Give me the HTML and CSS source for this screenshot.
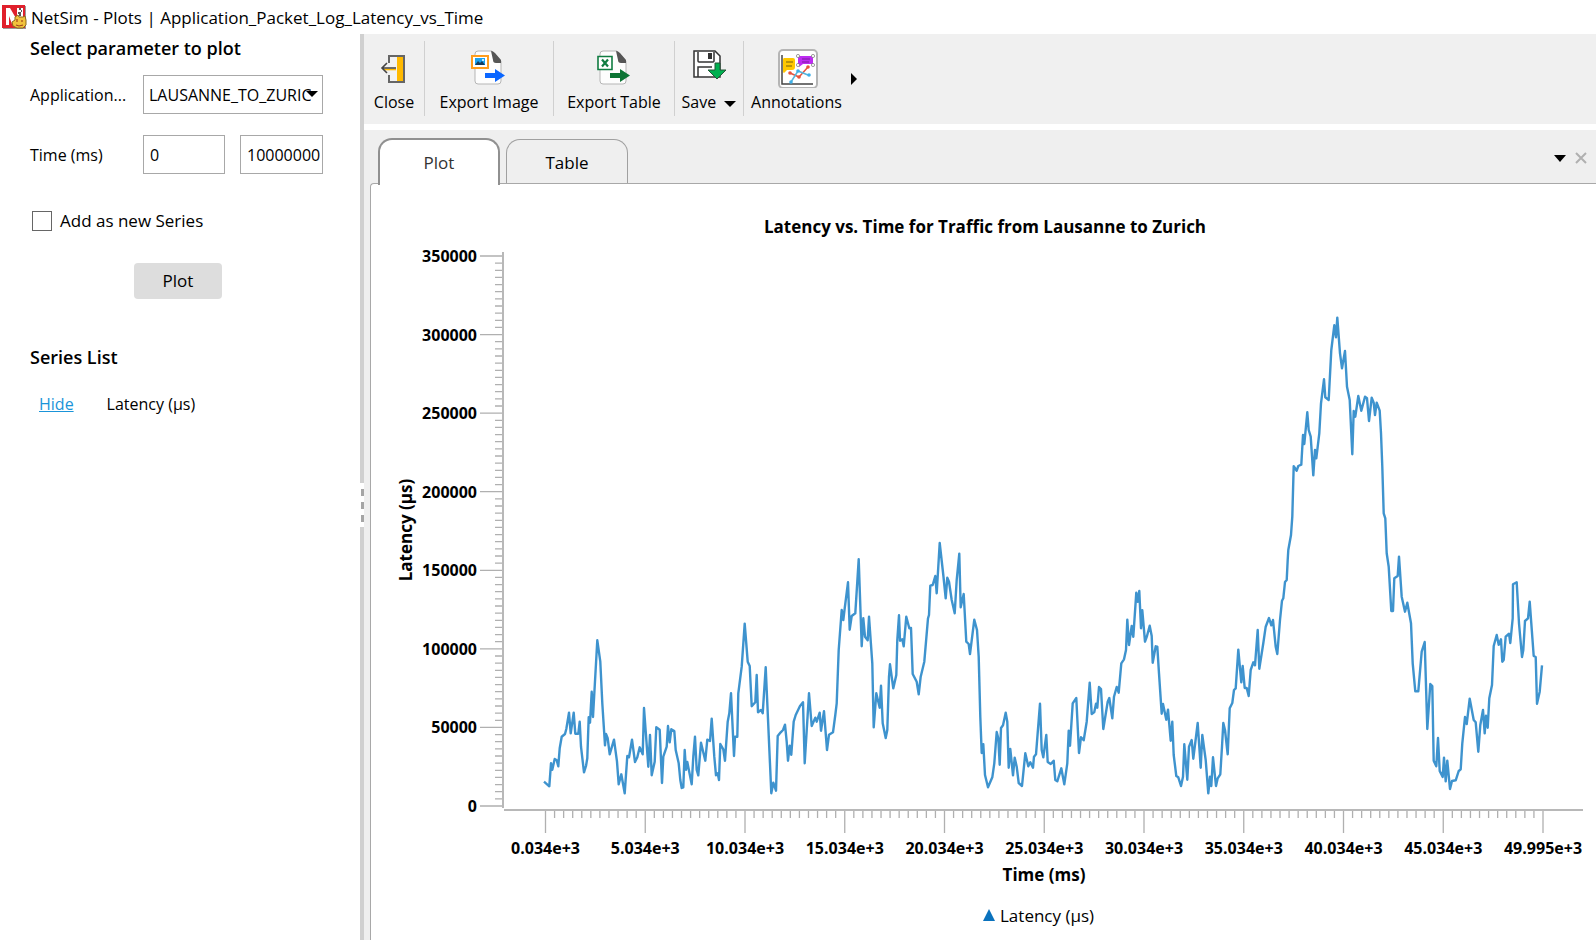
FILE: index.html
```html
<!DOCTYPE html>
<html lang="en">
<head>
  <meta charset="UTF-8">
  <meta name="viewport" content="width=device-width, initial-scale=1.0">
  <title>NetSim - Plots | Application_Packet_Log_Latency_vs_Time</title>
  <link rel="stylesheet" href="styles.css">
</head>
<body>

<header class="titlebar">
  <svg class="logo" width="25" height="25" viewBox="0 0 25 25">
    <rect x="1" y="1" width="23" height="23" fill="#999"/>
    <rect x="0" y="0" width="23" height="23" fill="#e0202c"/>
    <path d="M4 20V3h4l7 12V3h6v10h-7l-4 6-3-8v9z" fill="#fff"/>
    <path d="M17 4h2M19 6h1M16 8h3M17 10h2" stroke="#222" stroke-width="1.500"/>
    <path d="M13 12l3-2 1 2h4l2-1 1 4v5l-3 3h-6l-4-2-1-4 3-2z" fill="#f2c23c" stroke="#8a6a1c" stroke-width="1"/>
    <path d="M15 14v3M20 15v2M14 20l3 1 4-1" stroke="#a0421a" stroke-width="1.200" fill="none"/>
  </svg>
  <span>NetSim - Plots | Application_Packet_Log_Latency_vs_Time</span>
</header>

<div class="workspace">
  <aside class="sidebar">
    <h2>Select parameter to plot</h2>
    <form class="params">
      <label for="application">Application...</label>
      <span class="select-wrap">
        <select id="application">
          <option>LAUSANNE_TO_ZURICH</option>
        </select>
        <svg class="caret" width="12" height="6" viewBox="0 0 12 6"><path d="M0 0h12L6 6z"/></svg>
      </span>

      <label for="timeFrom">Time (ms)</label>
      <input type="text" id="timeFrom" value="0">
      <input type="text" id="timeTo" value="10000000" aria-label="Time to (ms)">

      <label class="check"><input type="checkbox" name="newSeries"> Add as new Series</label>
      <button class="plot-button" type="button">Plot</button>
    </form>

    <h2>Series List</h2>
    <div class="series">
      <a href="#">Hide</a>
      <span>Latency (µs)</span>
    </div>
  </aside>

  <div class="splitter"><div class="grip"><i></i><i></i><i></i></div></div>

  <main class="content">
    <div class="toolbar">
      <button type="button" class="tool close">
        <svg width="38" height="38" viewBox="0 0 38 38">
          <path d="M14 15V8h15v26H14v-7" fill="#f2f2f2" stroke="#666" stroke-width="2"/>
          <path d="M22 9h6v24h-6z" fill="#ffb900"/>
          <path d="M9 21.500h12" stroke="#ffb900" stroke-width="1.600"/>
          <path d="M7 20h14M12 15l-5 5 5 5" fill="none" stroke="#444" stroke-width="1.600"/>
        </svg>
        <span>Close</span>
      </button>
      <button type="button" class="tool image">
        <svg width="38" height="38" viewBox="0 0 38 38">
          <path d="M5 6q0-3 3-3h14l9 10v20q0 3-3 3H8q-3 0-3-3z" fill="#fdfdfd" stroke="#b5b5b5"/>
          <path d="M21 3q2 0 4 2l6 7v3h-5q-3 0-3-3z" fill="#555"/>
          <path d="M2 8h16v12H2z" fill="#fff" stroke="#ff9d1c" stroke-width="2"/>
          <path d="M5 10h10v7H5z" fill="#1aa3f0"/>
          <path d="M5 17l3-4 2 2 2-2 3 4z" fill="#143c60"/>
          <circle cx="13" cy="12" r="1" fill="#fff"/>
          <path d="M15 25h10v-4l10 6.500-10 6.500v-4H15z" fill="#0a66ff"/>
        </svg>
        <span>Export Image</span>
      </button>
      <button type="button" class="tool table">
        <svg width="38" height="38" viewBox="0 0 38 38">
          <path d="M5 6q0-3 3-3h14l9 10v20q0 3-3 3H8q-3 0-3-3z" fill="#fdfdfd" stroke="#b5b5b5"/>
          <path d="M21 3q2 0 4 2l6 7v3h-5q-3 0-3-3z" fill="#555"/>
          <path d="M3 8.500h14v13H3z" fill="#fff" stroke="#107c41" stroke-width="1.600"/>
          <path d="M7 11.500l6 7M13 11.500l-6 7" stroke="#107c41" stroke-width="2.200"/>
          <path d="M15 25h10v-4l10 6.500-10 6.500v-4H15z" fill="#0c7434"/>
        </svg>
        <span>Export Table</span>
      </button>
      <button type="button" class="tool save">
        <svg width="38" height="38" viewBox="0 0 38 38">
          <path d="M4 3h21l5 5v21H4z" fill="#fff" stroke="#333" stroke-width="1.500"/>
          <path d="M8 4v9q0 1 1 1h14q1 0 1-1V4M8 29V19h14" fill="none" stroke="#333" stroke-width="1.500"/>
          <path d="M18 5h4v6h-4z" fill="#333"/>
          <path d="M25 15h5v7h6l-9 9-9-9h7z" fill="#00b050" stroke="#245437"/>
        </svg>
        <span>Save <svg class="caret" width="12" height="6" viewBox="0 0 12 6"><path d="M0 0h12L6 6z"/></svg></span>
      </button>
      <button type="button" class="tool annotations">
        <svg width="42" height="40" viewBox="0 0 42 40">
          <g transform="translate(2 1)">
            <rect x="1" y="1" width="38" height="38" rx="4" fill="#fff" stroke="#b5b5b5" stroke-width="2"/>
            <path d="M4 6v29h31" fill="none" stroke="#444" stroke-width="1.500"/>
            <path d="M12 24l9 4 9-10" fill="none" stroke="#e8533c" stroke-width="1.500"/>
            <path d="M13 33l7-11 10 4" fill="none" stroke="#55b4dc" stroke-width="1.500"/>
            <g fill="#e8533c"><circle cx="12" cy="24" r="1.800"/><circle cx="21" cy="28" r="1.800"/><circle cx="30" cy="18" r="1.800"/></g>
            <g fill="#3fb0e8"><circle cx="13" cy="33" r="1.800"/><circle cx="20" cy="22" r="1.800"/><circle cx="31" cy="26" r="1.800"/></g>
            <path d="M6 9h9q2 0 2 2v7q0 3-3 3H9l-3 3q-1 0-1-2V11q0-2 1-2z" fill="#ffc800"/>
            <path d="M8 13h7M8 17h6" stroke="#74600c" stroke-width="1.200"/>
            <path d="M20 7h15v8H25l-4 3v-3h-1z" fill="#be2cf2"/>
            <path d="M24 10h8M24 13h7" stroke="#7a1b9e"/>
            <g fill="#fff" stroke="#777" stroke-width=".7"><circle cx="20" cy="7" r="1.600"/><circle cx="35" cy="7" r="1.600"/><circle cx="20" cy="16" r="1.600"/><circle cx="35" cy="16" r="1.600"/></g>
          </g>
        </svg>
        <span>Annotations</span>
      </button>
      <button type="button" class="more" aria-label="More">
        <svg width="6" height="12" viewBox="0 0 6 12"><path d="M0 0l6 6-6 6z"/></svg>
      </button>
    </div>

    <div class="tabs">
      <button type="button" class="tab active">Plot</button>
      <button type="button" class="tab">Table</button>
      <button type="button" class="tab-menu" aria-label="Tab list">
        <svg width="12" height="7" viewBox="0 0 12 7"><path d="M0 0h12L6 7z"/></svg>
      </button>
      <button type="button" class="tab-close" aria-label="Close tab">
        <svg width="12" height="12" viewBox="0 0 12 12"><path d="M1 1l10 10M11 1L1 11" stroke="#b0b0b0" stroke-width="2"/></svg>
      </button>
    </div>

    <section class="panel">
      <svg class="chart" viewBox="371 184 1225 756">
        <text class="chart-title" x="985" y="233">Latency vs. Time for Traffic from Lausanne to Zurich</text>
        <text class="axis-title" transform="translate(412 530) rotate(-90)">Latency (µs)</text>
        <path class="axis" d="M503 252v556M504 810h1079"/>
        <path class="ticks" id="ticks"/>
        <g class="y-labels" id="yLabels"></g>
        <g class="x-labels" id="xLabels"></g>
        <polyline class="line" points="
          544,781.7 549.3,786.3 551,763.3 552.3,769.7 554.7,759 556.7,760.3 558.3,766.3 559.7,748.3 561.7,736.7 565,734 566.3,729 569,712.7
          570.7,733.3 573.7,712.7 575.3,733.7 578.3,733.7 579.7,721.7 581,746.7 584,772.3 586,766 587.3,758.3 588.7,717.3 590,722.7 591.7,691.7
          593,717 597.3,640.3 600.3,661.7 602.3,703.3 605,745.3 606,734 607.7,738.3 609.7,754.3 614,739.7 617,761.7 618.7,784.3 621.3,774.3
          624.7,793.3 627.3,756 629,757.3 632,739.7 635,762 637.3,757.3 639.7,747.3 642.7,754.3 644,708 648.3,766.7 650,735 651.7,775.3
          654.7,761.7 656.3,727.3 659.7,729.7 662,783 663.3,756.7 666.7,746.7 668,726 669.7,742.3 671.3,729.3 674.3,731 675.7,750 678.7,763.3
          680.3,780 681.7,788 683.3,787.3 684.7,750 686,769.7 687.3,762 691.7,784.3 693.3,756.7 695,736.7 696.7,770 698.3,775.3 701,742.7
          705.3,760.7 707.3,739.7 710,741 711.7,718.7 714.3,756.7 716,775.3 717.7,773.3 719,780 720.3,744 723.3,749.3 725,760.7 727.7,721.7
          729.3,713.3 731,693.3 734,756 735,736.7 737.3,736.7 738.3,693.3 741.7,666.7 744.7,623.7 747.7,661.7 749.7,666 751.7,706.3 755.3,702.3
          756.7,675 758,712.3 761,710 762.7,713.3 765.7,667.3 771.3,793.3 773.3,782.7 776,790.7 777.7,736 780.7,732.3 783,730 785,724.7
          786.7,741.7 788,760.7 789.7,745.7 791.3,754.7 793.7,721.7 795.7,715 800,706 803,702.3 804.7,763.3 809,693.3 811.7,726 815.3,717.7
          816.7,721.7 819.7,712.7 821,730.7 824,711.3 827,750 829,734.7 833,732.3 835.3,715 836.7,703.3 838.7,650 841.7,610 843.3,620
          844.7,608.3 848,582.3 849.7,629.7 851.7,616 855.3,613.3 858.7,559.3 861.7,646.3 863.3,618.3 865,636.7 867.7,640.3 869,616.7 872.3,663.3
          873.7,727.3 876.3,693.3 879.7,707.7 881,685.7 882.7,723.3 885.7,738 887.3,730 889,676.7 890,664.3 893.3,688.3 896.3,675 897.3,640
          899,615.3 900,640.7 902.3,639.3 903.7,646.3 906.3,616.7 909.3,628.3 911,628 912.7,674 916.7,681.7 918.7,694.3 920.7,676.7 924.3,661.7
          928,618.3 929,615 930.3,585.7 932.7,585 935.3,576 936.7,593.3 939.7,543 943.3,575 945.7,598.3 947.3,577.7 949,581.7 951.7,600
          954.7,613.3 956.7,580 959.3,553.7 960.7,607.3 963.7,594 966.3,641.7 968.7,644 970,654 974.3,619.7 977,630 978.7,656.7 980.3,716.7
          981.7,753 983.3,744.3 985,775 988,787.3 992.3,777.3 994.3,763.3 996.7,732 998.3,738.3 999.7,764.7 1001,728 1003,725.3 1005.7,712.7
          1007.3,721.7 1008.7,767.7 1010.3,749 1013,775.3 1014.7,757.7 1016.7,766.7 1018.7,783 1022,786 1025.3,753.3 1028.3,766.3 1030.3,762.3 1033,767.7
          1034,756.7 1036,754.3 1040,703.7 1041.7,750 1043.3,757.3 1046.3,735 1047.7,762 1050.7,764 1053.7,760.7 1055.3,780 1057.3,781.3 1061.3,768.3
          1064.3,784.3 1067.3,763.3 1068.7,730.7 1070,745.7 1072.7,703.3 1076.3,698 1079,753 1081,737.3 1083.7,740.3 1086.7,721.7 1089.7,682.7 1091.7,714
          1094.3,712 1096,703.7 1097.3,707.7 1099,687 1101,689 1103.3,729 1107.7,701.7 1109.3,698 1112.3,718.3 1114,696.7 1116.7,687 1118.7,692.7
          1121.3,663.3 1124,659.3 1126,650 1127.3,619.7 1129,645 1131.7,626 1133.3,636.7 1136.3,592.7 1137.7,601.7 1139.3,591 1141,628.3 1142.3,610.3
          1145,641.7 1147,636 1149.7,625.7 1151.7,636 1152.7,662.7 1155.7,646.3 1157.3,646.7 1159,673.3 1161.7,713.7 1163,704 1166.3,719.7 1168,709.7
          1170.7,740.7 1172.3,721.7 1173.7,755 1176.3,776 1178.3,777.3 1181,786 1183,776.7 1184.3,744.3 1187.3,779.7 1189,746.7 1191.7,740 1193.3,758.7
          1197.7,723 1200.7,767.7 1202.3,735 1205.7,760 1208.3,793.3 1210,776.7 1211.3,786 1213,757.3 1216,786 1217.7,778.3 1220.3,774.3 1222,746.7
          1223.3,723 1225,730 1227.7,754.3 1229.7,708.3 1232.3,703 1234,690 1235.7,688.3 1238.3,649.7 1241.3,682.3 1242.7,666 1244.7,688 1246.7,688
          1248.7,696 1250.7,670 1253.3,662.3 1255,665.3 1257.7,630 1259.3,668.7 1263.3,643.3 1265.7,626.7 1269,618 1271.3,625.3 1273,620 1275.7,646.7
          1277.3,654 1280,620 1282,600.7 1283.3,598.3 1285,582 1286.7,580 1287.7,560 1288.3,550 1291,535 1292.3,516.7 1293.7,466.3 1296.7,470.7
          1298.3,466 1301.3,464.7 1303,435 1304.3,444 1307.3,412.3 1308.7,430 1310.7,436.7 1313.3,475.3 1315,450 1316.3,458.3 1319.3,433.3 1321,403.3
          1324,379.3 1325.3,397.3 1328.7,400 1331.3,350 1334.3,325.3 1336,337.3 1337.3,317.7 1340,353.3 1342,368.3 1345,351 1347,386.7 1349.7,400
          1352.3,454.3 1353.7,411 1355.3,416.7 1358.3,396 1361.3,410.7 1365,396.7 1367,398.3 1369,421 1371.7,397.7 1373.7,402.7 1375,415 1376.7,402.7
          1379.7,410.7 1381,433.3 1382.3,466.7 1383.7,513.3 1385.3,518.3 1386.7,553.3 1388.7,566.7 1391.3,611 1393,611 1394.3,578.3 1397.7,576 1399,556.7
          1401.7,596.7 1405,611.7 1407.3,602.7 1411,623.3 1412.7,663.3 1415.3,691.3 1418.3,691.3 1421.7,651.7 1424.7,642 1427.3,729 1430.3,684 1432.3,686
          1433.7,760.7 1436.3,766.3 1438,738 1439.7,771 1442.7,777 1444,757.7 1445.7,781.3 1447.3,760.7 1450,789 1452,781 1455.7,780.3 1458.7,771
          1460.7,769.3 1462.3,743.3 1465,717 1466.7,724 1469.7,698.7 1473.7,720 1475.7,722.3 1478.3,751.7 1480.3,725 1483,710 1484.7,733.3 1486,715.7
          1487.7,727.7 1489.3,698.3 1492,685 1493.7,646 1496.7,635 1498.7,644.7 1501,639.3 1502.3,661.7 1503.7,660 1505.7,636.7 1509,633.7 1510.3,643
          1512.7,618.3 1513,584.3 1516.7,582.3 1519,623.3 1522,657 1523.3,650 1525,621 1528,618.3 1529.7,601.7 1533.7,656 1535.7,657 1537,703.7
          1539.7,691.7 1542,665.3"/>
        <text class="axis-title" x="1044" y="881">Time (ms)</text>
        <path d="M983 921l6-12 6 12z" fill="#0a72bd"/>
        <text class="legend" x="1000" y="922">Latency (µs)</text>
      </svg>
    </section>
  </main>
</div>

<script src="chart.js"></script>
</body>
</html>
```
FILE: styles.css
```css
* { box-sizing: border-box; }
body {
  margin: 0; height: 100vh; display: flex; flex-direction: column;
  background: #fff; color: #000; font-family: "Open Sans", "Noto Sans", sans-serif; font-size: 16px;
  overflow: hidden;
}
button, input, select { font: inherit; color: inherit; }
button { background: none; border: none; padding: 0; }

.titlebar { display: flex; align-items: center; gap: 4px; height: 34px; padding-left: 2px; font-size: 17px; }

.workspace { display: flex; flex: 1; min-height: 0; }

/* left side */
.sidebar { width: 360px; padding-left: 30px; flex: none; }
.sidebar h2 { margin: 0; font-size: 18px; font-weight: 600; line-height: 28px; }
.params {
  display: grid; grid-template-columns: 98px 82px 83px; grid-auto-rows: 39px;
  column-gap: 15px; row-gap: 21px; align-items: center; margin: 13px 0 49px;
}
.select-wrap { grid-column: span 2; position: relative; }
.select-wrap .caret { position: absolute; right: 5px; top: 16px; pointer-events: none; }
.params select, .params input[type=text] {
  display: block; width: 100%; height: 39px; padding: 0 0 0 6px; margin: 0;
  border: 1px solid #a8a8a8; border-radius: 0; background: #fff; appearance: none;
}
.params select { padding: 0 11px 0 5px; }
.check { grid-column: 1 / -1; display: flex; align-items: center; gap: 8px; margin-top: 12px; font-size: 17px; }
.check input {
  appearance: none; width: 20px; height: 20px; margin: 0 0 0 2px;
  border: 1px solid #666; background: #fff;
}
.plot-button {
  grid-column: 1 / -1; justify-self: start; width: 88px; height: 36px; margin: 12px 0 0 104px;
  background: #ddd; border-radius: 4px; font-size: 17px;
}
.series { display: flex; gap: 33px; margin: 21px 0 0 9px; line-height: 24px; }
.series a { color: #1a94d9; }

.splitter { width: 4px; background: #d0d0d0; display: flex; align-items: center; }
.grip {
  width: 4px; height: 44px; background: #fff; display: flex; flex-direction: column;
  align-items: center; justify-content: center; gap: 6px; margin-top: 36px;
}
.grip i { width: 3px; height: 7px; background: #a5a5a5; }

/* right side */
.content { flex: 1; min-width: 0; display: flex; flex-direction: column; background: #efefef; }
.toolbar { display: flex; height: 96px; padding: 7px 0 0; border-bottom: 6px solid #fff; background: #f0f0f0; }
.tool {
  display: flex; flex-direction: column; align-items: center; justify-content: space-between;
  height: 75px; padding: 7px 0 2px; border-right: 1px solid #d0d0d0; line-height: 24px; white-space: nowrap;
}
.close { width: 61px; }
.image { width: 129px; }
.table { width: 121px; }
.save { width: 69px; }
.save .caret { margin-left: 4px; vertical-align: 1px; }
.annotations { width: 105px; border-right: none; }
.more { height: 75px; padding-left: 2px; }

.tabs { display: flex; align-items: flex-end; height: 54px; padding: 0 9px 0 14px; }
.tab {
  width: 122px; height: 45px; margin-right: 6px; border: 1px solid #a0a0a0; border-bottom: none;
  border-radius: 14px 14px 0 0; font-size: 17px;
}
.tab.active {
  height: 47px; background: #fff; color: #333; margin-bottom: -1px; border: 2px solid #909090; border-bottom: none;
  position: relative; z-index: 1;
}
.tab-menu { margin: 0 9px 20px auto; height: 12px; display: flex; align-items: center; }
.tab-close { margin-bottom: 20px; height: 12px; display: flex; }

.panel {
  flex: 1; min-height: 0; margin: -1px 0 0 6px; background: #fff;
  border-top: 1px solid #a8a8a8; border-left: 1px solid #a8a8a8; border-radius: 4px 0 0 0;
}
.chart { display: block; width: 100%; }
.chart text { text-anchor: middle; font-size: 16px; }
.chart .chart-title, .chart .axis-title { font-size: 17px; font-weight: 700; }
.chart .legend { text-anchor: start; font-size: 17px; }
.y-labels text, .x-labels text { font-weight: 700; }
.chart .y-labels text { text-anchor: end; }
.axis { stroke: #b8b8b8; stroke-width: 2; }
.ticks { stroke: #b0b0b0; stroke-width: 1.3; }
.line { fill: none; stroke: #1c80c6; stroke-width: 2.4; stroke-opacity: .85; stroke-linejoin: round; }
```
FILE: chart.js
```js
const SVG = 'http://www.w3.org/2000/svg';
const xLabels = ['0.034e+3', '5.034e+3', '10.034e+3', '15.034e+3', '20.034e+3', '25.034e+3',
  '30.034e+3', '35.034e+3', '40.034e+3', '45.034e+3', '49.995e+3'];
const MINOR = 11;

function addLabel(parent, x, y, content) {
  const text = document.createElementNS(SVG, 'text');
  text.setAttribute('x', x);
  text.setAttribute('y', y);
  text.textContent = content;
  document.getElementById(parent).appendChild(text);
}

let d = '';

// x axis
const stepX = (1543 - 545.5) / 10;
for (let i = 0; i <= 10 * MINOR; i++) {
  const x = 545.5 + i * stepX / MINOR;
  d += `M${x} 811v${i % MINOR ? 7 : 22}`;
  if (i % MINOR === 0) addLabel('xLabels', x, 854, xLabels[i / MINOR]);
}

// y axis
const stepY = (806 - 256) / 7;
for (let i = 0; i <= 7 * MINOR; i++) {
  const y = 806 - i * stepY / MINOR;
  d += `M502 ${y}h${i % MINOR ? -7 : -22}`;
  if (i % MINOR === 0) addLabel('yLabels', 477, y + 6, i / MINOR * 50000);
}

document.getElementById('ticks').setAttribute('d', d);
```
